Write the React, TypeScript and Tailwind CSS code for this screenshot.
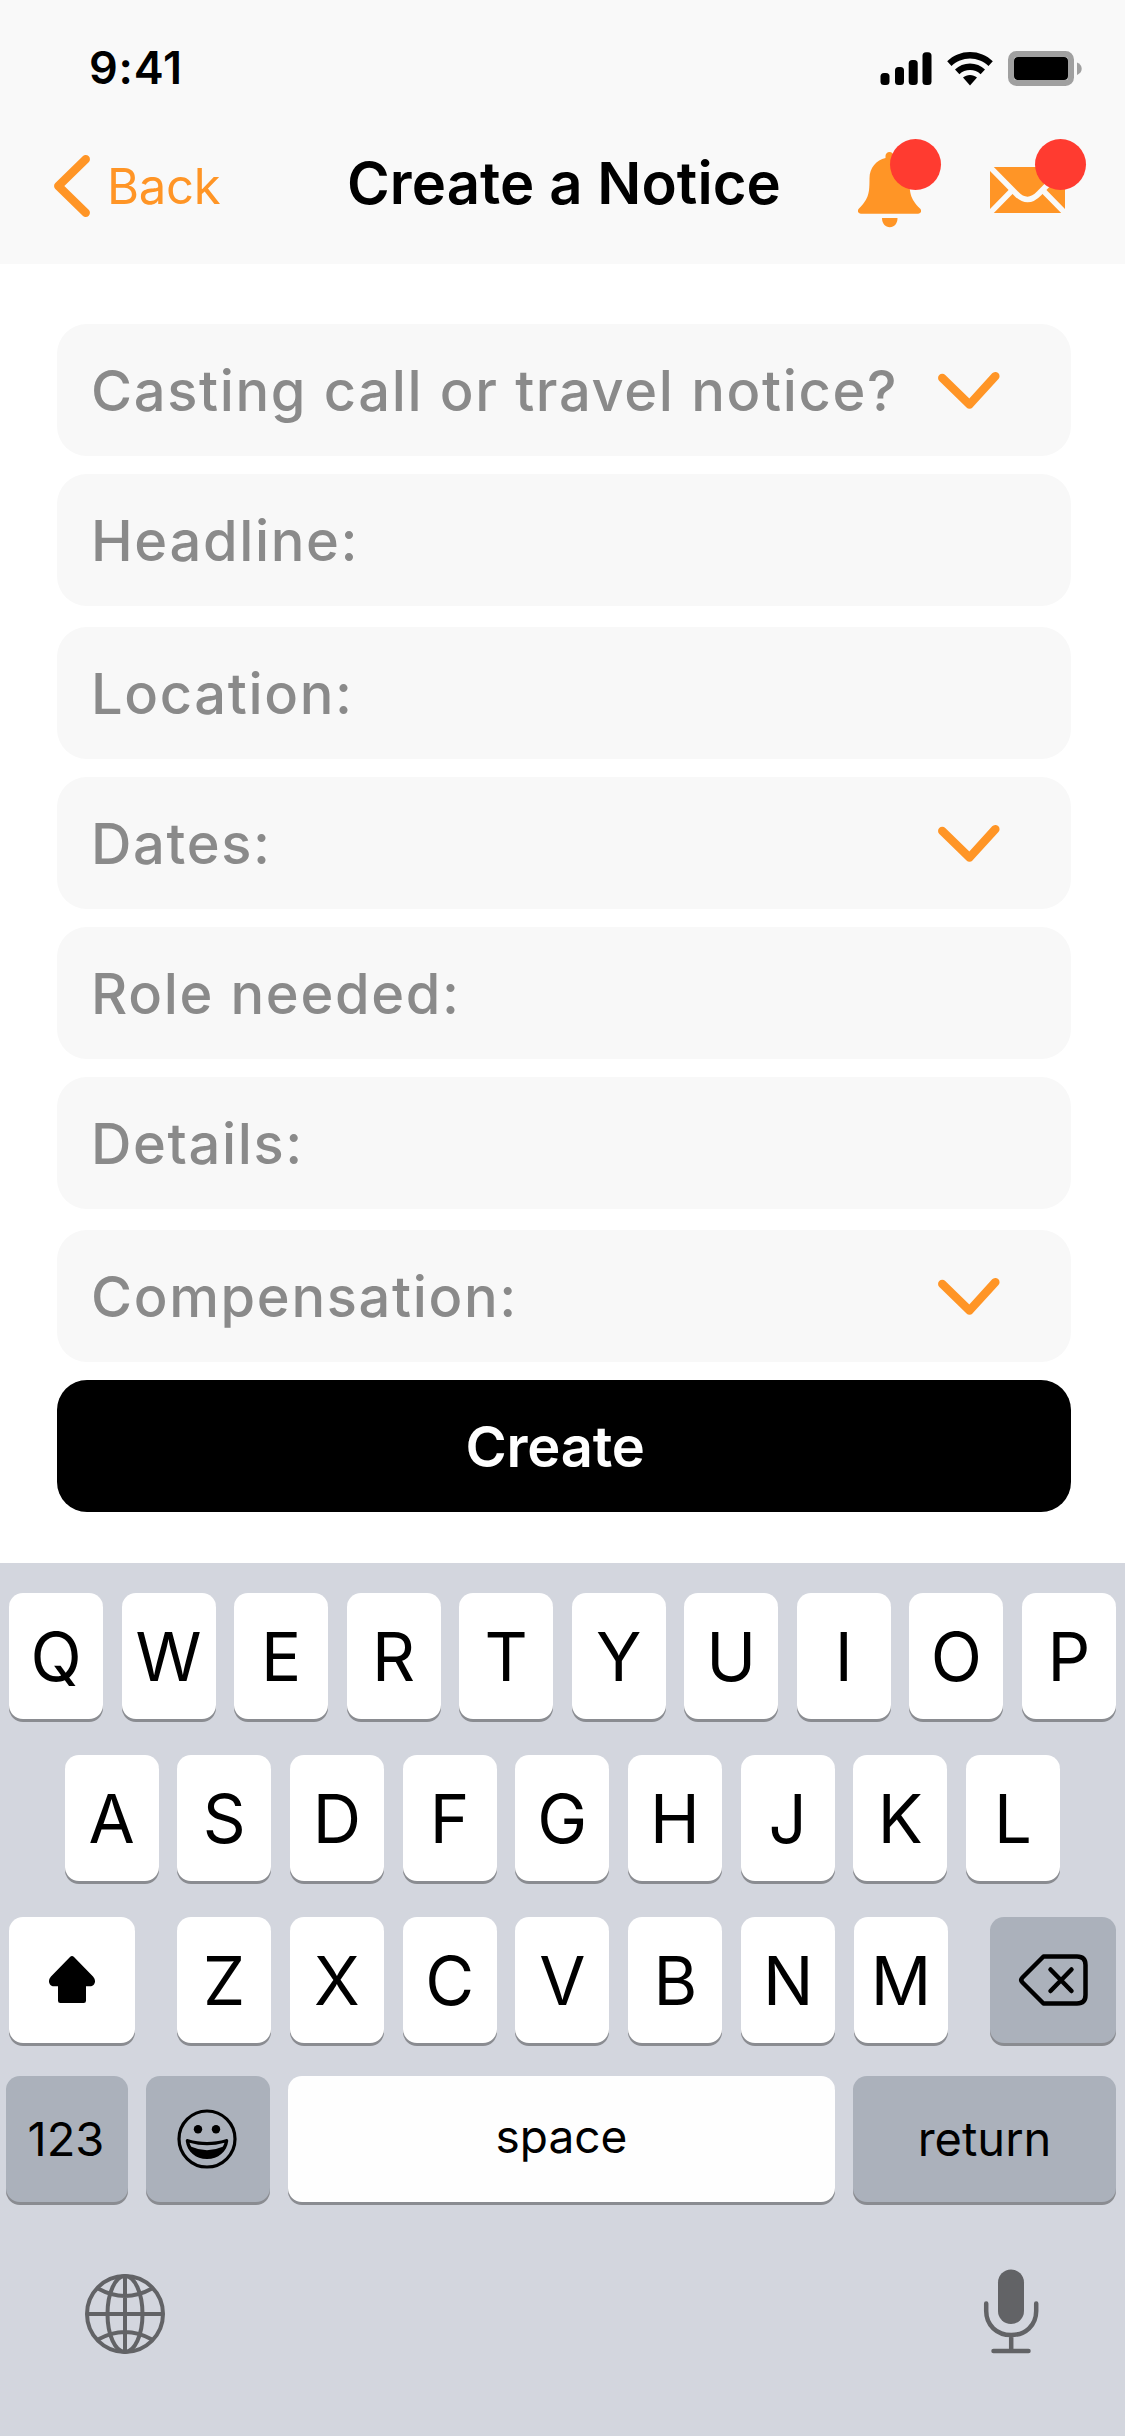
import React from 'react';

interface Field {
  label: string;
  dropdown?: boolean;
}

// fields are stacked in three groups, with a slightly wider gap between groups
const fieldGroups: Field[][] = [
  [{ label: 'Casting call or travel notice?', dropdown: true }, { label: 'Headline:' }],
  [{ label: 'Location:' }, { label: 'Dates:', dropdown: true }, { label: 'Role needed:' }, { label: 'Details:' }],
  [{ label: 'Compensation:', dropdown: true }],
];

const ORANGE = '#ff9526';

function StatusIcons() {
  return (
    <svg className="w-[202px] h-9" viewBox="880 51 202 36">
      <rect x="880.5" y="73" width="9" height="12" rx="3.5" />
      <rect x="895" y="67" width="9" height="18" rx="3.5" />
      <rect x="908.7" y="60" width="9" height="25" rx="3.5" />
      <rect x="922.5" y="52.3" width="9" height="32.7" rx="3.5" />
      <path d="M970 52c8.800 0 16.800 3.400 22.800 9.200l-4.300 4.800c-5-4.700-11.600-7.500-18.500-7.500s-13.500 2.800-18.500 7.500l-4.300-4.800C953.200 55.400 961.200 52 970 52z" />
      <path d="M970 63.600c5.800 0 11 2.200 15 5.900l-4.400 4.700c-2.900-2.600-6.600-4.100-10.600-4.100s-7.700 1.500-10.600 4.100l-4.400-4.700c4-3.700 9.200-5.900 15-5.900z" />
      <path d="M970 75c2.600 0 5 .9 7 2.600l-7 7.800-7-7.800c2-1.700 4.400-2.600 7-2.600z" />
      <rect x="1011" y="54" width="60" height="29" rx="5.500" fill="none" stroke="#a0a0a0" strokeWidth="6" />
      <rect x="1014" y="57" width="54" height="23" rx="4" />
      <path d="M1077 62.500c3 1.200 4.700 3.400 4.700 6.200s-1.700 5-4.700 6.200z" fill="#a0a0a0" />
    </svg>
  );
}

function BellIcon() {
  return (
    <svg className="w-[63px] h-[76px]" viewBox="858 152 63 76" fill={ORANGE}>
      <path d="M889.500 152c2.300 0 4 1.800 4 4v2c9 2 16 9.500 16 20.500 0 14 .5 20 10.500 30 2.200 2.200 1 5.200-2 5.200h-57c-3 0-4.200-3-2-5.200 10-10 10.500-16 10.500-30 0-11 7-18.500 16-20.500v-2c0-2.200 1.700-4 4-4z" />
      <path d="M882 218h15.500c0 5.500-3.200 9.300-7.700 9.300s-7.800-3.800-7.800-9.300z" />
    </svg>
  );
}

function MailIcon() {
  return (
    <svg className="w-[75px] h-[46px]" viewBox="990 167 75 46">
      <rect x="990" y="167" width="75" height="46" fill={ORANGE} />
      <g fill="none" stroke="#f9f9f9" strokeWidth="5.500">
        <path d="M987 164l29 29.500q11.500 12 23 0l29-29.500" />
        <path d="M988 215l24.500-25M1067 215l-24.500-25" />
      </g>
    </svg>
  );
}

function Chevron() {
  return (
    <svg className="w-[62px] h-[38px]" viewBox="938 371 62 38" fill="none" stroke={ORANGE} strokeWidth="8.500" strokeLinecap="round" strokeLinejoin="round">
      <path d="M942.300 378L969.500 404.500L995.300 376.200" />
    </svg>
  );
}

function FieldRow({ label, dropdown }: Field) {
  return (
    <button className="flex items-center justify-between w-full h-[132px] rounded-[30px] bg-[#f8f8f8] pl-[34px] pr-[71px] text-left">
      <span className="pt-0.5 text-[56px] leading-none font-medium tracking-[1.650px] text-[#8a8a8a] whitespace-nowrap">{label}</span>
      {dropdown && <Chevron />}
    </button>
  );
}

interface KeyProps {
  children: React.ReactNode;
  className?: string;
}

function Key({ children, className = 'w-[94px] bg-white text-[67px]' }: KeyProps) {
  return (
    <button className={`flex items-center justify-center shrink-0 h-[126px] rounded-[14px] leading-none shadow-[0_3px_0_#8a8c91] ${className}`}>
      {children}
    </button>
  );
}

function Letters({ keys }: { keys: string }) {
  return (
    <>
      {keys.split('').map(letter => (
        <Key key={letter}>{letter}</Key>
      ))}
    </>
  );
}

function Keyboard() {
  return (
    <div className="h-[873px] bg-[#d3d6de] pt-[30px] text-black">
      <div className="flex justify-between px-[9px]">
        <Letters keys="QWERTYUIOP" />
      </div>
      <div className="flex justify-between pl-[64.500px] pr-[65px] mt-9">
        <Letters keys="ASDFGHJKL" />
      </div>
      <div className="flex justify-between px-[9px] mt-9">
        <Key className="w-[126px] bg-white">
          <svg className="w-[46px] h-12" viewBox="49 1956 46 48">
            <path d="M70 1957q2-2 4 0l19 19.500c4 4.500 1.500 9.700-3 9.700h-4v14.500q0 2.300-2.300 2.300h-23.400q-2.300 0-2.300-2.300v-14.500h-4c-4.500 0-7-5.200-3-9.700z" />
          </svg>
        </Key>
        <div className="flex justify-between w-[771px]">
          <Letters keys="ZXCVBNM" />
        </div>
        <Key className="w-[126px] bg-[#abb1bb]">
          <svg className="w-[70px] h-[54px]" viewBox="1018 1953 70 54" fill="none" stroke="#000" strokeWidth="4.500" strokeLinecap="round" strokeLinejoin="round">
            <path d="M1043.500 1956.500H1077q8.500 0 8.500 8.500v30q0 8.500-8.500 8.500h-33.500l-21-21q-2.500-2.500 0-5z" />
            <path d="M1050.500 1969.500l21 21.500M1071.500 1969.500l-21 21.500" />
          </svg>
        </Key>
      </div>
      <div className="flex gap-[18px] pl-1.5 mt-[33px]">
        <Key className="w-[122px] bg-[#abb1bb] text-[47px] pr-0.5 pb-0.5">123</Key>
        <Key className="w-[124px] bg-[#abb1bb] pr-[3px] pb-px">
          <svg className="w-15 h-15" viewBox="177 2109 60 60">
            <circle cx="207" cy="2139" r="28" fill="none" stroke="#000" strokeWidth="3.200" />
            <circle cx="198" cy="2129.300" r="4.200" />
            <circle cx="216" cy="2129.300" r="4.200" />
            <path fillRule="evenodd" d="M188.200 2139.200c12 3.700 25.600 3.700 37.600 0 1.600-.5 2.600.5 2.400 2-1.400 10.500-10 17.800-21.200 17.800s-19.800-7.300-21.200-17.800c-.2-1.500.8-2.500 2.400-2zM189.500 2142.800q.6 2 1.800 4 15.700 7 31.400 0 1.200-2 1.800-4-17.500 5-35 0z" />
          </svg>
        </Key>
        <Key className="w-[547px] bg-[#fefefe] text-[46px] pb-1.5">space</Key>
        <Key className="w-[263px] bg-[#abb1bb] text-[47px] pb-0.5">return</Key>
      </div>
      <div className="flex items-start justify-between pl-[85px] pr-[86px] mt-[67px]">
        <svg className="w-20 h-20 mt-[5px]" viewBox="0 0 80 80" fill="none" stroke="#626366" strokeWidth="4">
          <circle cx="40" cy="40" r="38" />
          <ellipse cx="40" cy="40" rx="17.500" ry="38" />
          <path d="M40 2v76M2 40h76M13 14.500q27 15 54 0M13 65.500q27-15 54 0" />
        </svg>
        <svg className="w-[56px] h-[86px]" viewBox="983 2269 56 86" fill="none" stroke="#626366" strokeWidth="4.500" strokeLinecap="round">
          <rect x="998" y="2269.500" width="26" height="54.500" rx="13" fill="#626366" stroke="none" />
          <path d="M986.200 2303.500v7.500c0 14 10.500 24 25 24s25-10 25-24v-7.500M1011.200 2335v15M993.500 2351h35" />
        </svg>
      </div>
    </div>
  );
}

export default function App() {
  return (
    <div className="flex flex-col w-[1125px] h-[2436px] bg-white overflow-hidden font-['Inter',sans-serif]">
      <header className="h-[264px] bg-[#f9f9f9]">
        <div className="flex items-center justify-between h-[137px] pl-[89px] pr-[43px]">
          <span className="mb-0.5 text-[45px] leading-none font-semibold tracking-[0.800px]">9:41</span>
          <StatusIcons />
        </div>
        <div className="flex items-start h-[127px] pl-[54px]">
          <button className="flex items-center w-[293px] h-[97px]">
            <svg className="w-9 h-[62px]" viewBox="54 154 36 62" fill="none" stroke={ORANGE} strokeWidth="8.500" strokeLinecap="round" strokeLinejoin="round">
              <path d="M85.700 158.300L58.300 185L85.700 211.700" />
            </svg>
            <span className="ml-[17px] mt-0.5 text-[49px] leading-none tracking-[-0.300px] text-[#ff9526]">Back</span>
          </button>
          <h1 className="w-[511px] mt-[17px] text-[58px] leading-[58px] font-semibold tracking-[0.100px] whitespace-nowrap">Create a Notice</h1>
          <button className="relative w-[63px] mt-[15px]">
            <BellIcon />
            <span className="absolute left-8 top-[-13px] w-[51px] h-[51px] rounded-full bg-[#ff3b30]" />
          </button>
          <button className="relative w-[75px] ml-[69px] mt-[30px]">
            <MailIcon />
            <span className="absolute left-[45px] top-[-28px] w-[51px] h-[51px] rounded-full bg-[#ff3b30]" />
          </button>
        </div>
      </header>

      <main className="h-[1299px] pt-[60px] pl-[57px] pr-[54px]">
        <div className="flex flex-col gap-[21px]">
          {fieldGroups.map(group => (
            <div key={group[0].label} className="flex flex-col gap-[18px]">
              {group.map(field => (
                <FieldRow key={field.label} {...field} />
              ))}
            </div>
          ))}
        </div>
        <button className="w-full h-[132px] mt-[18px] pt-0.5 pr-[18px] rounded-[30px] bg-black text-white text-[56px] leading-none font-semibold tracking-[-0.200px]">
          Create
        </button>
      </main>

      <Keyboard />
    </div>
  );
}
